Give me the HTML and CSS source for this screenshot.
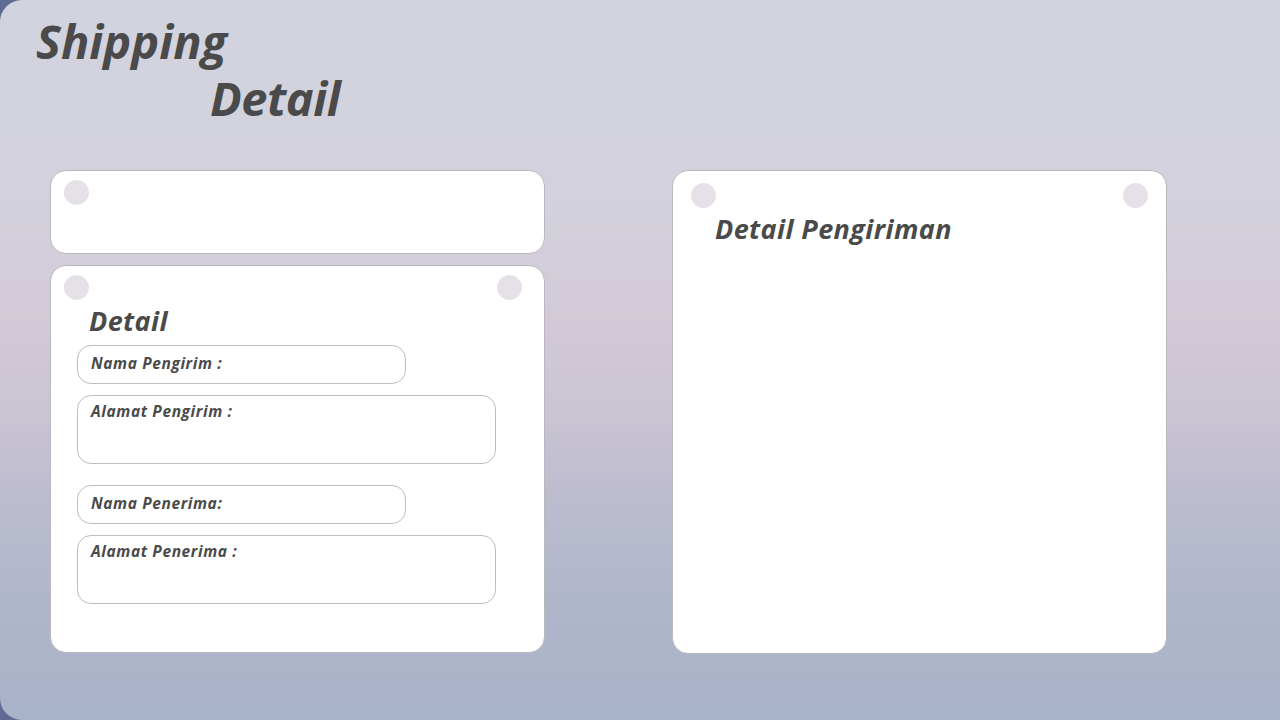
FILE: index.html
```html
<!DOCTYPE html>
<html lang="id">
<head>
<meta charset="utf-8">
<title>Shipping Detail</title>
<link rel="stylesheet" href="styles.css">
</head>
<body>
<main class="screen">
  <header class="title">
    <h1 class="title-line">Shipping</h1>
    <h1 class="title-line title-indent">Detail</h1>
  </header>
  <section class="board">
    <div class="col-left">
      <div class="card card-small">
        <div class="dots dots-small"><span class="dot"></span></div>
      </div>
      <div class="card card-detail">
        <div class="dots dots-detail"><span class="dot"></span><span class="dot"></span></div>
        <h2 class="card-title detail-title">Detail</h2>
        <div class="fields">
          <div class="field field-short">Nama Pengirim :</div>
          <div class="field field-long">Alamat Pengirim :</div>
          <div class="field field-short field-gap">Nama Penerima:</div>
          <div class="field field-long">Alamat Penerima :</div>
        </div>
      </div>
    </div>
    <div class="card card-right">
      <div class="dots dots-right"><span class="dot"></span><span class="dot"></span></div>
      <h2 class="card-title right-title">Detail Pengiriman</h2>
    </div>
  </section>
</main>
</body>
</html>
```
FILE: styles.css
```css
html, body {
  margin: 0;
  padding: 0;
}
body {
  background: #5f6b95;
  width: 1280px;
  height: 720px;
  overflow: hidden;
}
.screen {
  box-sizing: border-box;
  width: 1280px;
  height: 720px;
  border-radius: 22px 0 0 22px;
  background: linear-gradient(180deg, #d1d3de 0px, #d3d2dc 200px, #d3c9d6 330px, #c9c3d2 420px, #bcbccf 500px, #b0b6ca 600px, #a8b2c8 720px);
  font-family: "Open Sans", "Liberation Sans", sans-serif;
  color: #4a4a4a;
}
.title {
  padding: 13px 0 0 36px;
  height: 170px;
  box-sizing: border-box;
}
.title-line {
  margin: 0;
  font-family: "Open Sans", sans-serif;
  font-style: italic;
  font-weight: 700;
  font-size: 47px;
  line-height: 57px;
  letter-spacing: 0;
  color: #4a4a4a;
}
.title-indent {
  padding-left: 174px;
  letter-spacing: -0.5px;
}
.board {
  display: flex;
  padding-left: 50px;
  gap: 127px;
}
.col-left {
  display: flex;
  flex-direction: column;
  gap: 11px;
  width: 495px;
}
.card {
  box-sizing: border-box;
  background: #ffffff;
  border: 1px solid #b9b8be;
  border-radius: 16px;
}
.card-small {
  height: 84px;
}
.card-detail {
  height: 388px;
}
.card-right {
  width: 495px;
  height: 484px;
}
.dots {
  display: flex;
  justify-content: space-between;
}
.dot {
  width: 25px;
  height: 25px;
  border-radius: 50%;
  background: #e6e1e8;
}
.dots-small {
  padding: 9px 0 0 13px;
}
.dots-detail {
  padding: 9px 22px 0 13px;
}
.dots-right {
  padding: 12px 18px 0 18px;
}
.card-title {
  margin: 0;
  font-style: italic;
  font-weight: 700;
  font-size: 27px;
  line-height: 32px;
  letter-spacing: 0.4px;
  color: #4a4a4a;
}
.detail-title {
  padding: 5px 0 0 38px;
}
.right-title {
  padding: 5px 0 0 42px;
}
.fields {
  display: flex;
  flex-direction: column;
  gap: 11px;
  padding: 8px 0 0 26px;
}
.field {
  box-sizing: border-box;
  border: 1px solid #bdbcc0;
  border-radius: 14px;
  padding: 5px 0 0 13px;
  font-style: italic;
  font-weight: 700;
  font-size: 15.5px;
  line-height: 20px;
  letter-spacing: 0.6px;
  color: #4a4a4a;
}
.field-short {
  width: 329px;
  height: 39px;
  padding-top: 7px;
}
.field-long {
  width: 419px;
  height: 69px;
}
.field-gap {
  margin-top: 10px;
}
```
